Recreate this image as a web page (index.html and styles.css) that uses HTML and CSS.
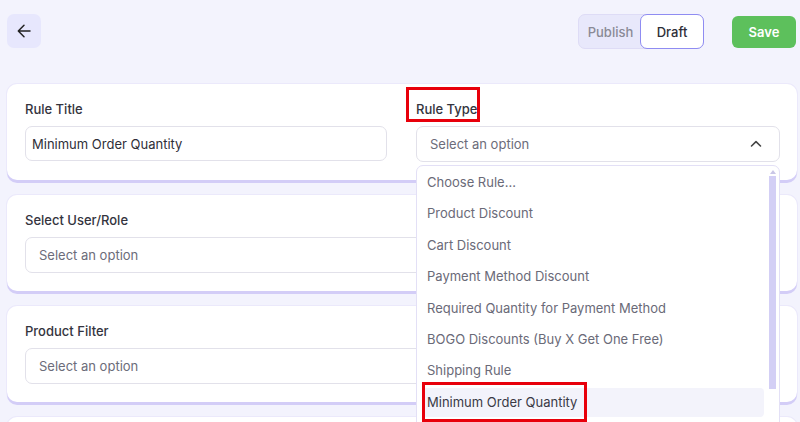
FILE: index.html
```html
<!DOCTYPE html>
<html lang="en">
<head>
<meta charset="utf-8">
<title>Rule Editor</title>
<link rel="stylesheet" href="styles.css">
</head>
<body>
<div class="page">
  <header class="topbar">
    <button class="back-btn" aria-label="Back">
      <svg width="18" height="18" viewBox="0 0 18 18" fill="none" stroke="#222" stroke-width="1.5" stroke-linecap="round" stroke-linejoin="round"><path d="M15 9H3.5M9 3.3 3.3 9 9 14.7"/></svg>
    </button>
    <div class="actions">
      <div class="toggle">
        <span class="toggle-opt">Publish</span>
        <span class="toggle-opt active">Draft</span>
      </div>
      <button class="save-btn">Save</button>
    </div>
  </header>

  <main class="cards">
    <section class="card two-col">
      <div class="field">
        <label class="label">Rule Title</label>
        <div class="input">Minimum Order Quantity</div>
      </div>
      <div class="field">
        <label class="label"><span class="marked-label">Rule Type</span></label>
        <div class="select-wrap">
          <div class="input select">
            <span class="placeholder">Select an option</span>
            <svg width="14" height="14" viewBox="0 0 14 14" fill="none" stroke="#444" stroke-width="1.6" stroke-linecap="round" stroke-linejoin="round"><path d="M2.5 9 7 4.6 11.5 9"/></svg>
          </div>
          <div class="dropdown">
            <ul class="options">
              <li class="option">Choose Rule...</li>
              <li class="option">Product Discount</li>
              <li class="option">Cart Discount</li>
              <li class="option">Payment Method Discount</li>
              <li class="option">Required Quantity for Payment Method</li>
              <li class="option">BOGO Discounts (Buy X Get One Free)</li>
              <li class="option">Shipping Rule</li>
              <li class="option hovered"><span class="marked-option">Minimum Order Quantity</span></li>
            </ul>
            <div class="scrollbar">
              <span class="scroll-arrow"></span>
              <span class="scroll-thumb"></span>
            </div>
          </div>
        </div>
      </div>
    </section>

    <section class="card">
      <label class="label">Select User/Role</label>
      <div class="input select-plain"><span class="placeholder">Select an option</span></div>
    </section>

    <section class="card">
      <label class="label">Product Filter</label>
      <div class="input select-plain"><span class="placeholder">Select an option</span></div>
    </section>

    <section class="card"></section>
  </main>
</div>
</body>
</html>
```

FILE: styles.css
```css
* { box-sizing: border-box; }

html, body {
  margin: 0;
  padding: 0;
  background: #f3f3fd;
  font-family: Inter, "Noto Sans", "Liberation Sans", sans-serif;
  color: #2f2f38;
  overflow: hidden;
}

.page {
  width: 800px;
  height: 422px;
  overflow: hidden;
}

.topbar {
  display: flex;
  justify-content: space-between;
  align-items: center;
  padding: 14px 4px 0 7px;
  height: 49px;
}

.back-btn {
  width: 34px;
  height: 34px;
  border: none;
  border-radius: 7px;
  background: #e7e7fd;
  display: flex;
  align-items: center;
  justify-content: center;
  padding: 0;
  margin-top: -1px;
}

.actions {
  display: flex;
  align-items: center;
  gap: 28px;
}

.toggle {
  display: flex;
  height: 35px;
  background: #e8e8fb;
  border: 1px solid #dedcf6;
  border-radius: 7px;
}

.toggle-opt {
  display: flex;
  align-items: center;
  justify-content: center;
  font-size: 13px;
  font-weight: 500;
  color: #8a8a96;
  width: 61px;
  padding-left: 2px;
}

.toggle-opt.active {
  width: 64px;
  padding-left: 0;
  margin: -1px -1px -1px 0;
  background: #fff;
  border: 1.5px solid #8f8cf2;
  border-radius: 7px;
  color: #2e2e38;
}

.save-btn {
  width: 64px;
  height: 32px;
  border: none;
  border-radius: 6px;
  background: #5dc05c;
  color: #fff;
  font-family: inherit;
  font-size: 13px;
  font-weight: 600;
  padding: 0;
}

.cards {
  display: flex;
  flex-direction: column;
  gap: 15px;
  padding: 35px 3px 0 7px;
}

.card {
  background: #fff;
  border-radius: 10px;
  box-shadow: 0 3px 0 #d3cdf7, 0 0 0 1px #ebe9fb;
  padding: 17px 17px 18px 18px;
  min-height: 95px;
}

.two-col {
  display: grid;
  grid-template-columns: 362px 1fr;
  column-gap: 29px;
  position: relative;
  z-index: 2;
}

.label {
  display: block;
  font-size: 13px;
  font-weight: 500;
  line-height: 16px;
  color: #34343e;
  margin-bottom: 9px;
}

.marked-label {
  position: relative;
  display: inline-block;
}

.marked-label::after {
  content: "";
  position: absolute;
  left: -10px;
  right: -3px;
  top: -14px;
  bottom: -5px;
  border: 3px solid #e8000b;
}

.input {
  height: 35px;
  border: 1px solid #e2e1ea;
  border-radius: 7px;
  font-size: 13px;
  color: #2f2f38;
  display: flex;
  align-items: center;
  padding: 0 6px;
  background: #fff;
}

.select {
  justify-content: space-between;
  padding: 0 16px 0 13px;
  height: 36px;
}

.select-plain {
  height: 36px;
  padding-left: 13px;
}

.placeholder {
  color: #6c6c7a;
}

.select-wrap {
  position: relative;
}

.dropdown {
  position: absolute;
  top: calc(100% + 3px);
  left: 0;
  right: 0;
  height: 270px;
  background: #fff;
  border: 1px solid #e3e0f6;
  border-radius: 7px;
  display: flex;
  z-index: 5;
}

.options {
  list-style: none;
  margin: 0;
  padding: 2px 2px 0 5px;
  flex: 1;
  display: flex;
  flex-direction: column;
  gap: 2.4px;
}

.option {
  height: 29px;
  line-height: 29px;
  padding-left: 5px;
  font-size: 13px;
  color: #6a6a78;
  border-radius: 4px;
  flex-shrink: 0;
}

.option.hovered {
  background: #f3f3fb;
  color: #3a3a46;
}

.marked-option {
  position: relative;
  display: inline-block;
}

.marked-option::after {
  content: "";
  position: absolute;
  left: -5px;
  right: -10px;
  top: -6px;
  bottom: -5px;
  border: 3px solid #e8000b;
}

.scrollbar {
  width: 13px;
  display: flex;
  flex-direction: column;
  align-items: center;
  padding-top: 4px;
  gap: 2px;
}

.scroll-arrow {
  width: 0;
  height: 0;
  border-left: 3px solid transparent;
  border-right: 3px solid transparent;
  border-bottom: 4px solid #c9c6e6;
}

.scroll-thumb {
  width: 7px;
  height: 213px;
  background: #d3cff5;
}
```
